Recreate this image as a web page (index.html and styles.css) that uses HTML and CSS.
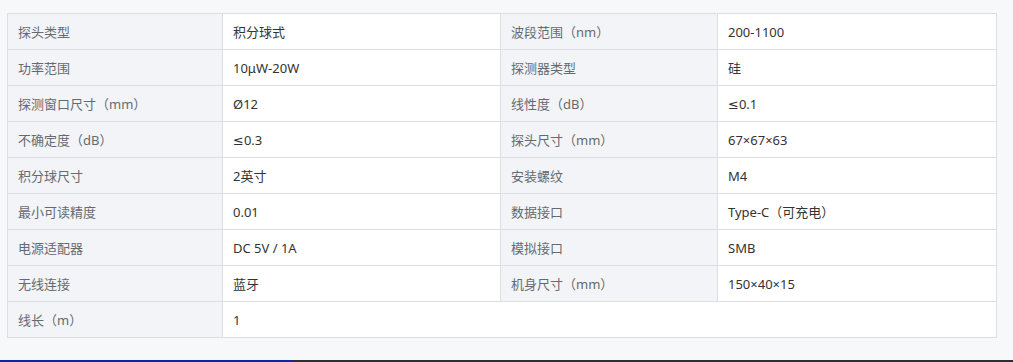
FILE: index.html
```html
<!DOCTYPE html>
<html lang="zh">
<head>
<meta charset="utf-8">
<title>参数</title>
<link rel="stylesheet" href="styles.css">
</head>
<body>
<div class="page">
  <div class="spec">
    <div class="cell label">探头类型</div><div class="cell value">积分球式</div><div class="cell label">波段范围（nm）</div><div class="cell value">200-1100</div>
    <div class="cell label">功率范围</div><div class="cell value">10μW-20W</div><div class="cell label">探测器类型</div><div class="cell value">硅</div>
    <div class="cell label">探测窗口尺寸（mm）</div><div class="cell value">Ø12</div><div class="cell label">线性度（dB）</div><div class="cell value">≤0.1</div>
    <div class="cell label">不确定度（dB）</div><div class="cell value">≤0.3</div><div class="cell label">探头尺寸（mm）</div><div class="cell value">67×67×63</div>
    <div class="cell label">积分球尺寸</div><div class="cell value">2英寸</div><div class="cell label">安装螺纹</div><div class="cell value">M4</div>
    <div class="cell label">最小可读精度</div><div class="cell value">0.01</div><div class="cell label">数据接口</div><div class="cell value">Type-C（可充电）</div>
    <div class="cell label">电源适配器</div><div class="cell value">DC 5V / 1A</div><div class="cell label">模拟接口</div><div class="cell value">SMB</div>
    <div class="cell label">无线连接</div><div class="cell value">蓝牙</div><div class="cell label">机身尺寸（mm）</div><div class="cell value">150×40×15</div>
    <div class="cell label">线长（m）</div><div class="cell value wide">1</div>
  </div>
  <div class="bar"><div class="bar-blue"></div><div class="bar-dark"></div></div>
</div>
</body>
</html>
```

FILE: styles.css
```css
html, body {
  margin: 0;
  padding: 0;
  background: #f7f8fa;
}
body {
  font-family: "Noto Sans", "DejaVu Sans", "Noto Sans CJK SC", sans-serif;
  font-size: 13px;
}
.page {
  padding-top: 13px;
  height: 362px;
  box-sizing: border-box;
  display: flex;
  flex-direction: column;
}
.spec {
  margin-left: 7px;
  width: 990px;
  box-sizing: border-box;
  display: grid;
  grid-template-columns: 215px 278px 217px 279px;
  border-top: 1px solid #dcdee2;
  border-left: 1px solid #dcdee2;
}
.cell {
  height: 36px;
  box-sizing: border-box;
  border-right: 1px solid #dcdee2;
  border-bottom: 1px solid #dcdee2;
  padding: 0 10px;
  display: flex;
  align-items: center;
  white-space: nowrap;
}
.label {
  background: #f3f4f7;
  color: #666a70;
}
.value {
  background: #ffffff;
  color: #333;
}
.wide {
  grid-column: 2 / 5;
}
.bar {
  margin-top: auto;
  height: 2px;
  display: flex;
}
.bar-blue {
  width: 292px;
  background: #0a27a9;
}
.bar-dark {
  flex: 1;
  background: #2b2e38;
}
```
